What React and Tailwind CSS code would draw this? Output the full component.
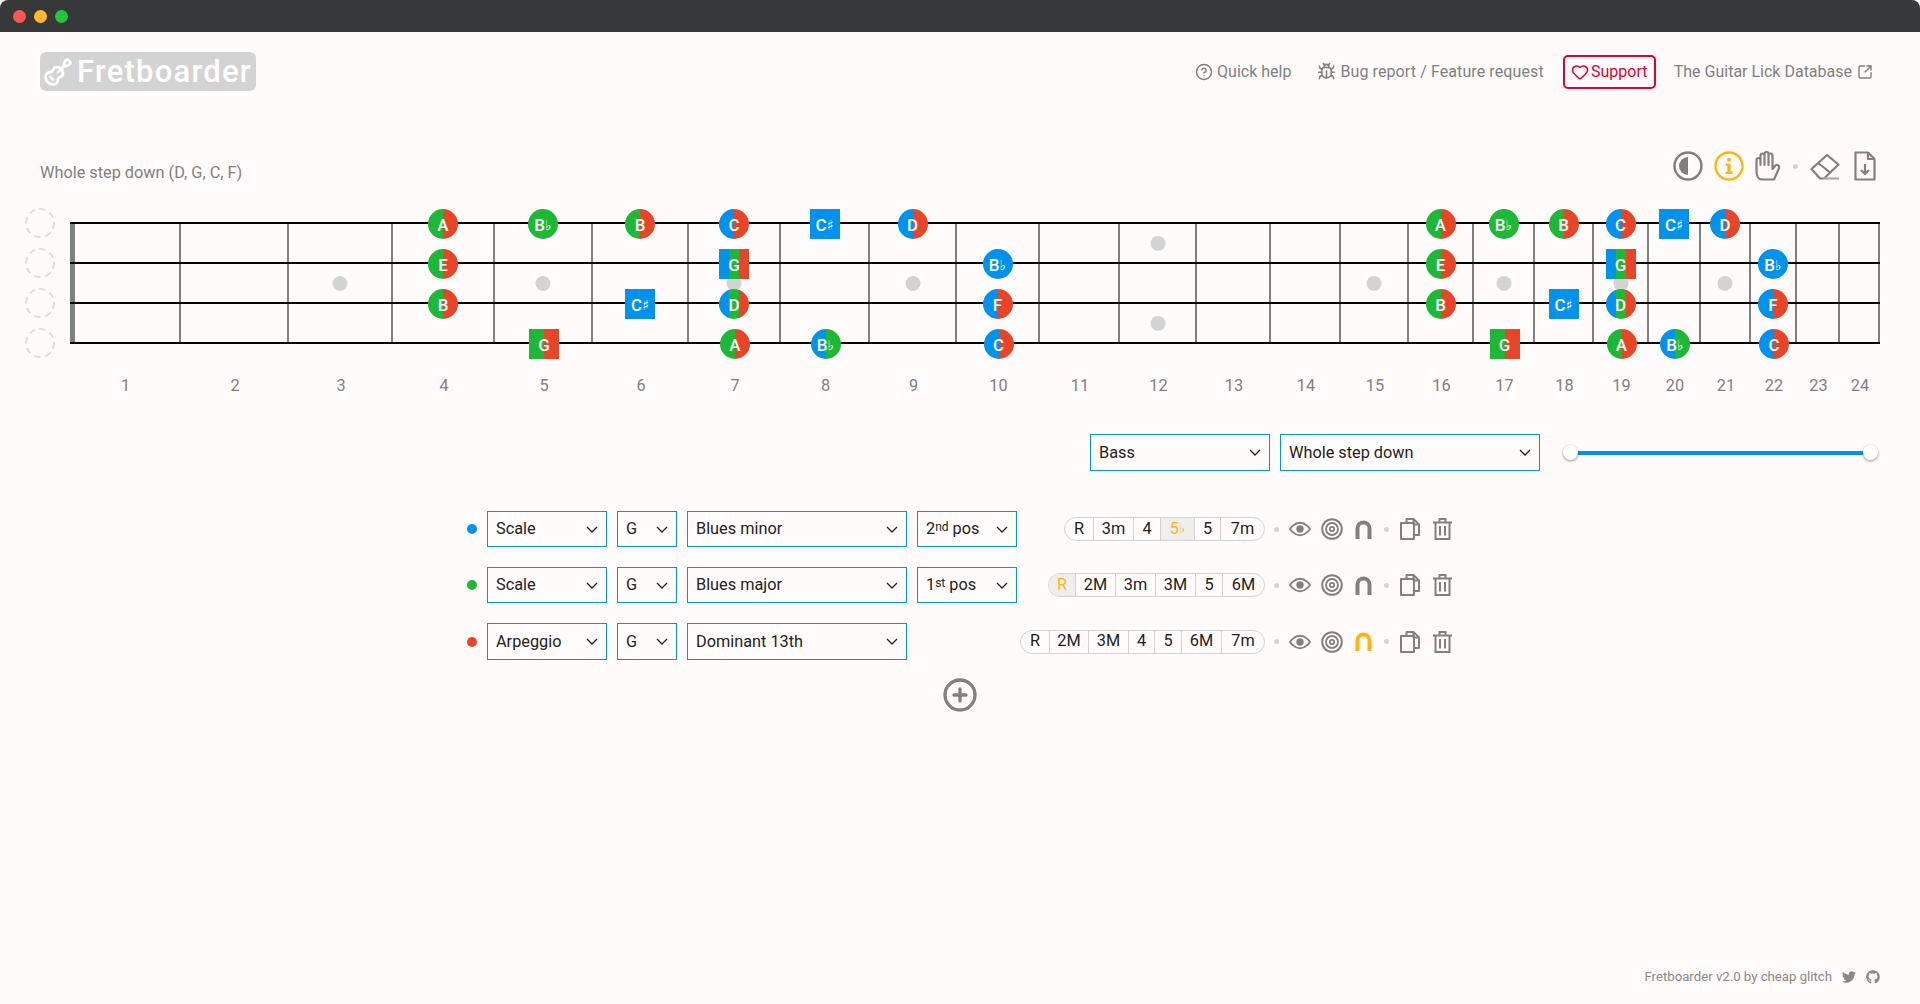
import { CircleHelp, Bug, Heart, Guitar, SquareArrowOutUpRight, CirclePlus } from "lucide-react";
import { FaTwitter, FaGithub } from "react-icons/fa";

const FRET_WIDTHS = [111, 108, 104, 102, 98, 96, 92, 89, 87, 83, 80, 77, 74, 70, 68, 65, 61, 59, 55, 52, 50, 46, 43, 40];
const MARKERS = { 3: 1, 5: 1, 7: 1, 9: 1, 12: 2, 15: 1, 17: 1, 19: 1, 21: 1 };

const B = "bg-[#0092ed]";
const V = "bg-[#1db835]";
const R = "bg-[#e84427]";

// notes of the first octave, repeated 12 frets up
const NOTES = [
  { fret: 4, string: 0, name: "A", bands: [V, R] },
  { fret: 4, string: 1, name: "E", bands: [V, R] },
  { fret: 4, string: 2, name: "B", bands: [V, R] },
  { fret: 5, string: 0, name: "B", acc: "♭", bands: [V] },
  { fret: 5, string: 3, name: "G", bands: [V, R], square: true },
  { fret: 6, string: 0, name: "B", bands: [V, R] },
  { fret: 6, string: 2, name: "C", acc: "♯", bands: [B], square: true },
  { fret: 7, string: 0, name: "C", bands: [B, R] },
  { fret: 7, string: 1, name: "G", bands: [B, V, R], square: true },
  { fret: 7, string: 2, name: "D", bands: [B, V, R] },
  { fret: 7, string: 3, name: "A", bands: [V, R] },
  { fret: 8, string: 0, name: "C", acc: "♯", bands: [B], square: true },
  { fret: 8, string: 3, name: "B", acc: "♭", bands: [B, V] },
  { fret: 9, string: 0, name: "D", bands: [B, R] },
  { fret: 10, string: 1, name: "B", acc: "♭", bands: [B] },
  { fret: 10, string: 2, name: "F", bands: [B, R] },
  { fret: 10, string: 3, name: "C", bands: [B, R] },
];

const STRING_TOP = ["top-[-13px]", "top-[27px]", "top-[67px]", "top-[107px]"];

const ROWS = [
  {
    dot: B, type: "Scale", name: "Blues minor", pos: ["2", "nd"],
    degrees: [["R", 29], ["3m", 40], ["4", 27], ["5", 34, "♭", true], ["5", 26], ["7m", 43]],
  },
  {
    dot: V, type: "Scale", name: "Blues major", pos: ["1", "st"],
    degrees: [["R", 27, null, true], ["2M", 40], ["3m", 40], ["3M", 40], ["5", 27], ["6M", 41]],
  },
  {
    dot: R, type: "Arpeggio", name: "Dominant 13th", magnet: true, tall: true,
    degrees: [["R", 29], ["2M", 39], ["3M", 40], ["4", 26], ["5", 27], ["6M", 40], ["7m", 42]],
  },
];

const Chevron = () => (
  <svg width="12" height="7" viewBox="0 0 12 7" fill="none" stroke="#222" strokeWidth="1.3" className="shrink-0">
    <path d="M1 1l5 5 5-5" />
  </svg>
);

const Select = ({ className, children }) => (
  <div className={`flex h-full items-center justify-between border border-[#0092ed] px-2 text-[#222] ${className}`}>
    <span className="pt-px">{children}</span>
    <Chevron />
  </div>
);

const Note = ({ note }) => {
  const shape = note.square ? "" : "rounded-full";
  return (
    <div className={`absolute left-1/2 z-10 h-[30px] w-[30px] -translate-x-1/2 overflow-hidden ${shape} ${STRING_TOP[note.string]} ${note.string === 3 ? "ml-px" : ""}`}>
      <div className="flex h-full w-full">
        {note.bands.map((c, i) => (
          <div key={i} className={`flex-1 ${c}`} />
        ))}
      </div>
      <div className="absolute inset-0 flex items-center justify-center pt-0.5 text-[17px] font-medium leading-none text-white">
        {note.name}
        {note.acc && <span className="font-['DejaVu_Sans'] text-[14px] font-normal">{note.acc}</span>}
      </div>
    </div>
  );
};

const FretColumn = ({ fret, width }) => {
  const inOctave = fret > 12 ? fret - 12 : fret;
  const notes = fret === 12 || fret === 24 ? [] : NOTES.filter((n) => n.fret === inOctave);
  const first = fret === 1;
  return (
    <div
      className={`relative h-full shrink-0 border-r-2 border-[#808080] ${first ? "border-l-[5px]" : ""}`}
      style={{ width }}
    >
      {MARKERS[fret] === 1 && (
        <div className="absolute left-1/2 top-[54px] h-[15px] w-[15px] -translate-x-1/2 rounded-full bg-[#d3d3d3]" />
      )}
      {MARKERS[fret] === 2 && (
        <>
          <div className="absolute left-1/2 top-[14px] h-[15px] w-[15px] -translate-x-1/2 rounded-full bg-[#d3d3d3]" />
          <div className="absolute left-1/2 top-[94px] h-[15px] w-[15px] -translate-x-1/2 rounded-full bg-[#d3d3d3]" />
        </>
      )}
      {notes.map((n, i) => (
        <Note key={i} note={n} />
      ))}
    </div>
  );
};

const OpenString = () => (
  <svg width="30" height="30" viewBox="0 0 30 30" fill="none" stroke="#dddddd" strokeWidth="2" className="shrink-0">
    <circle cx="15" cy="15" r="14" strokeDasharray="6.5 4.5" transform="rotate(-94 15 15)" />
  </svg>
);

const Eye = () => (
  <svg width="22" height="16" viewBox="0 0 22 16" fill="none" stroke="#808080" strokeWidth="1.9">
    <path d="M1 8s3.8-6.2 10-6.2S21 8 21 8s-3.8 6.2-10 6.2S1 8 1 8z" />
    <circle cx="11" cy="8" r="3.7" fill="#808080" stroke="none" />
  </svg>
);

const Rings = () => (
  <svg width="22" height="22" viewBox="0 0 22 22" fill="none" stroke="#808080">
    <circle cx="11" cy="11" r="9.8" strokeWidth="2" />
    <circle cx="11" cy="11" r="6" strokeWidth="1.8" />
    <circle cx="11" cy="11" r="2.2" strokeWidth="1.8" />
  </svg>
);

const Magnet = ({ on }) => (
  <svg width="17" height="19" viewBox="0 0 17 19" fill="none" stroke={on ? "#ffb511" : "#808080"} strokeWidth="4">
    <path d="M2.5 19V8.5a6 6 0 0 1 12 0V19" />
  </svg>
);

const Copy = () => (
  <svg width="20" height="22" viewBox="0 0 20 22" fill="none" stroke="#808080" strokeWidth="2" strokeLinejoin="round">
    <path d="M6.5 5V1h7l5.5 5.5V17h-5" />
    <path d="M13.5 1v5.5H19" />
    <path d="M1 5h13v16H1z" />
  </svg>
);

const Trash = () => (
  <svg width="19" height="22" viewBox="0 0 19 22" fill="none" stroke="#808080" strokeWidth="2">
    <path d="M0 4.5h19M6.5 4.5V1h6v3.5M2.5 4.5V21h14V4.5M7 8v9.5M12 8v9.5" />
  </svg>
);

const Contrast = () => (
  <svg width="30" height="30" viewBox="0 0 30 30" fill="none">
    <circle cx="15" cy="15" r="13.5" stroke="#808080" strokeWidth="2.4" />
    <path d="M15 6a9 9 0 0 0 0 18z" fill="#808080" />
  </svg>
);

const InfoCircle = () => (
  <svg width="30" height="30" viewBox="0 0 30 30" fill="none">
    <circle cx="15" cy="15" r="13.5" stroke="#ffb511" strokeWidth="2.4" />
    <circle cx="15" cy="8.7" r="2" fill="#ffb511" />
    <path d="M11.8 12.6h4.9v8h1.8v2.4h-7v-2.4h1.9v-5.6h-1.6z" fill="#ffb511" />
  </svg>
);

const HandIcon = () => (
  <svg width="27" height="30" viewBox="0 0 27 30" fill="none" stroke="#808080" strokeWidth="2.2" strokeLinejoin="round" strokeLinecap="round">
    <path d="M1.5 9a2 2 0 0 1 4 0v5M5.5 14V4.5a2 2 0 0 1 4 0V14M9.5 14V3a2 2 0 0 1 4 0v11M13.5 14V4.5a2 2 0 0 1 4 0V18l2.5-3a2.3 2.3 0 0 1 4 2.2L19 28.5H7C3 28.5 1.5 24 1.5 20V9" />
  </svg>
);

const EraserIcon = () => (
  <svg width="30" height="27" viewBox="0 0 30 27" fill="none" stroke="#808080" strokeWidth="2.2" strokeLinejoin="round">
    <path d="M1.5 16L17 2l11.5 9.5L14 25.5h-4z" />
    <path d="M8 10l13 10" />
    <path d="M13 25.5h16" stroke="#a8a8a8" />
  </svg>
);

const FileIcon = () => (
  <svg width="22" height="30" viewBox="0 0 22 30" fill="none" stroke="#808080" strokeWidth="2.2" strokeLinejoin="round">
    <path d="M1.5 1.5H14L20.5 8v20.5h-19z" />
    <path d="M14 1.5V8h6.5" />
    <path d="M11 13v9" />
    <path d="M7 19l4 4 4-4" />
  </svg>
);

const Sep = () => <div className="h-[5px] w-[5px] rounded-full bg-[#d3d3d3]" />;

const ArrangementRow = ({ row }) => (
  <div className={`flex items-center ${row.tall ? "h-[37px]" : "h-9"}`}>
    <div className={`mr-[10px] h-2.5 w-2.5 rounded-full ${row.dot}`} />
    <div className="flex h-full gap-[10px]">
      <Select className="w-[120px]">{row.type}</Select>
      <Select className="w-[60px]">G</Select>
      <Select className="w-[220px]">{row.name}</Select>
      {row.pos && (
        <Select className="w-[100px]">
          {row.pos[0]}
          <sup className="top-[-0.3em] text-[12px]">{row.pos[1]}</sup> pos
        </Select>
      )}
    </div>
    <div className="ml-auto flex h-6 overflow-hidden rounded-full border border-[#d3d3d3] text-[#222]">
      {row.degrees.map(([label, width, acc, active], i) => (
        <div
          key={i}
          className={`flex items-center justify-center border-[#d3d3d3] ${i < row.degrees.length - 1 ? "border-r" : ""} ${active ? "bg-[#eeeeee] text-[#ffb511]" : ""}`}
          style={{ width }}
        >
          {label}
          {acc && <span className="font-['DejaVu_Sans'] text-[13px]">{acc}</span>}
        </div>
      ))}
    </div>
    <div className="ml-[9px] flex w-[178px] shrink-0 items-center">
      <Sep />
      <div className="ml-[10px]"><Eye /></div>
      <div className="ml-[10px]"><Rings /></div>
      <div className="ml-[12px]"><Magnet on={row.magnet} /></div>
      <div className="ml-3"><Sep /></div>
      <div className="ml-[11px]"><Copy /></div>
      <div className="ml-[13px]"><Trash /></div>
    </div>
  </div>
);

export default function App() {
  return (
    <div className="flex h-screen w-full flex-col overflow-hidden bg-[#fffbfa] font-['Roboto',sans-serif] text-[16.3px] text-[#808080]">
      <div className="flex h-8 shrink-0 items-center gap-2 rounded-t-lg bg-[#37383a] pl-[13px]">
        <div className="h-[13px] w-[13px] rounded-full bg-[#ff5555]" />
        <div className="h-[13px] w-[13px] rounded-full bg-[#ffb82e]" />
        <div className="h-[13px] w-[13px] rounded-full bg-[#1fc83c]" />
      </div>

      {/* header */}
      <div className="mt-5 flex h-[39px] items-center justify-between pl-10 pr-[47px]">
        <div className="flex h-[39px] w-[216px] items-center gap-1 rounded-md bg-[#d3d3d3] pl-[3px] text-[31px] font-medium tracking-[1.2px] text-white">
          <Guitar size={30} strokeWidth={2.2} />
          <span className="pt-px">Fretboarder</span>
        </div>
        <div className="flex items-center text-base">
          <CircleHelp size={18} />
          <span className="ml-1 pt-px">Quick help</span>
          <Bug size={19} className="ml-[26px]" />
          <span className="ml-1 pt-px tracking-[0.1px]">Bug report / Feature request</span>
          <div className="ml-[19px] flex h-[34px] w-[93px] items-center justify-center gap-0.5 rounded-[5px] border-2 border-[#e4002b] text-[#e4002b]">
            <Heart size={18} />
            <span className="pt-px">Support</span>
          </div>
          <span className="ml-[18px] pt-px">The Guitar Lick Database</span>
          <SquareArrowOutUpRight size={16} strokeWidth={2.2} className="ml-[5px]" />
        </div>
      </div>

      {/* tuning label and tools */}
      <div className="mt-[60px] flex h-[30px] items-start justify-between pl-10 pr-[44px]">
        <div className="pt-[10px]">Whole step down (D, G, C, F)</div>
        <div className="flex h-[30px] items-center">
          <Contrast />
          <div className="ml-[11px]"><InfoCircle /></div>
          <div className="ml-[11px]"><HandIcon /></div>
          <div className="ml-[11px]"><Sep /></div>
          <div className="ml-3"><EraserIcon /></div>
          <div className="ml-[14px]"><FileIcon /></div>
        </div>
      </div>

      {/* fretboard */}
      <div className="mt-[41px] flex">
        <div className="flex h-[122px] w-[70px] flex-col gap-[10px] pl-[25px]">
          <div className="-mt-[14px] flex flex-col gap-[10px]">
            <OpenString />
            <OpenString />
            <OpenString />
            <OpenString />
          </div>
        </div>
        <div className="relative flex h-[122px] w-[1810px]">
          {FRET_WIDTHS.map((w, i) => (
            <FretColumn key={i} fret={i + 1} width={w} />
          ))}
          <div className="pointer-events-none absolute inset-0 flex flex-col justify-between">
            <div className="h-0.5 bg-black" />
            <div className="h-0.5 bg-black" />
            <div className="h-0.5 bg-black" />
            <div className="h-0.5 bg-black" />
          </div>
        </div>
      </div>
      <div className="mt-[30px] flex pl-[70px] leading-6">
        {FRET_WIDTHS.map((w, i) => (
          <div key={i} className="shrink-0 text-center" style={{ width: w }}>
            {i + 1}
          </div>
        ))}
      </div>

      {/* instrument and tuning */}
      <div className="mt-9 flex h-[37px] items-center justify-end pr-[42px]">
        <div className="flex h-full gap-[10px]">
          <Select className="w-[180px]">Bass</Select>
          <Select className="w-[260px]">Whole step down</Select>
        </div>
        <div className="relative ml-[23px] flex h-[15px] w-[315px] items-center">
          <div className="mx-[7px] h-1 flex-1 bg-[#0092ed]" />
          <div className="absolute left-0 h-[15px] w-[15px] rounded-full bg-white shadow-[0_1px_3px_rgba(0,0,0,0.45)]" />
          <div className="absolute right-0 h-[15px] w-[15px] rounded-full bg-white shadow-[0_1px_3px_rgba(0,0,0,0.45)]" />
        </div>
      </div>

      {/* scales */}
      <div className="ml-[467px] mt-10 flex w-[985px] flex-col gap-5">
        {ROWS.map((r, i) => (
          <ArrangementRow key={i} row={r} />
        ))}
      </div>
      <div className="mt-[17px] flex justify-center">
        <CirclePlus size={36} strokeWidth={2.2} />
      </div>

      {/* footer */}
      <div className="mt-auto flex items-center justify-end gap-[10px] pb-[18px] pr-10 text-[13.2px] leading-[18px] text-[#888888]">
        <span>Fretboarder v2.0 by cheap glitch</span>
        <FaTwitter size={14} />
        <FaGithub size={14} />
      </div>
    </div>
  );
}
